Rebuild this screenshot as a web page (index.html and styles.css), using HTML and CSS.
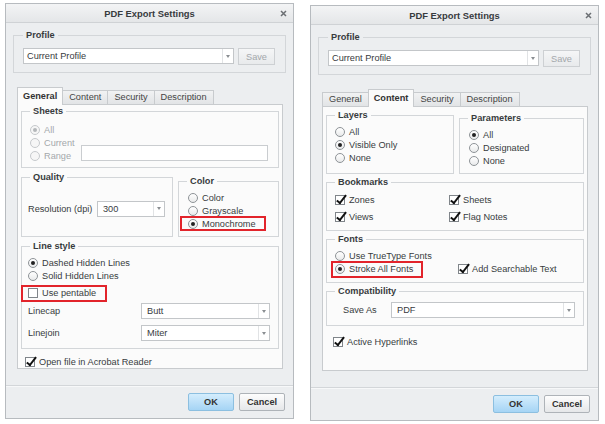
FILE: index.html
```html
<!DOCTYPE html>
<html lang="en">
<head>
  <meta charset="UTF-8" />
  <meta name="viewport" content="width=device-width, initial-scale=1.0"/>
  <title>PDF Export Settings</title>
  <link rel="stylesheet" href="styles.css">
</head>
<body>

<!-- General tab -->
<div class="dialog">
  <div class="titlebar">
    <span class="title">PDF Export Settings</span>
    <svg class="close" width="7" height="7" viewBox="0 0 7 7"><path d="M1 1L6 6M6 1L1 6" stroke="#6b6f73" stroke-width="1.5"/></svg>
  </div>
  <div class="dialog-body">
    <fieldset class="group profile">
      <legend>Profile</legend>
      <div class="combo"><span class="combo-text">Current Profile</span><span class="combo-arrow"></span></div>
      <button class="btn-save" disabled>Save</button>
    </fieldset>

    <div class="tabs">
      <span class="tab active">General</span>
      <span class="tab">Content</span>
      <span class="tab">Security</span>
      <span class="tab">Description</span>
    </div>
    <div class="tab-panel">
      <fieldset class="group sheets">
        <legend>Sheets</legend>
        <div class="opts">
          <div class="opt disabled"><span class="radio on"></span>All</div>
          <div class="opt disabled"><span class="radio"></span>Current</div>
          <div class="opt disabled"><span class="radio"></span>Range</div>
        </div>
        <div class="field"></div>
      </fieldset>

      <div class="pair">
        <fieldset class="group quality">
          <legend>Quality</legend>
          <span>Resolution (dpi)</span>
          <div class="combo res"><span class="combo-text">300</span><span class="combo-arrow"></span></div>
        </fieldset>
        <fieldset class="group color">
          <legend>Color</legend>
          <div class="opt"><span class="radio"></span>Color</div>
          <div class="opt"><span class="radio"></span>Grayscale</div>
          <div class="opt hl hl-mono"><span class="radio on"></span>Monochrome</div>
        </fieldset>
      </div>

      <fieldset class="group linestyle">
        <legend>Line style</legend>
        <div class="opt"><span class="radio on"></span>Dashed Hidden Lines</div>
        <div class="opt"><span class="radio"></span>Solid Hidden Lines</div>
        <div class="opt pentable hl hl-pen"><span class="check"></span>Use pentable</div>
        <div class="select-grid">
          <span>Linecap</span>
          <div class="combo"><span class="combo-text">Butt</span><span class="combo-arrow"></span></div>
          <span>Linejoin</span>
          <div class="combo"><span class="combo-text">Miter</span><span class="combo-arrow"></span></div>
        </div>
      </fieldset>

      <div class="opt open-file"><span class="check on"></span>Open file in Acrobat Reader</div>
    </div>
  </div>
  <div class="footer">
    <button class="btn primary">OK</button>
    <button class="btn">Cancel</button>
  </div>
</div>

<!-- Content tab -->
<div class="dialog">
  <div class="titlebar">
    <span class="title">PDF Export Settings</span>
    <svg class="close" width="7" height="7" viewBox="0 0 7 7"><path d="M1 1L6 6M6 1L1 6" stroke="#6b6f73" stroke-width="1.5"/></svg>
  </div>
  <div class="dialog-body">
    <fieldset class="group profile">
      <legend>Profile</legend>
      <div class="combo"><span class="combo-text">Current Profile</span><span class="combo-arrow"></span></div>
      <button class="btn-save" disabled>Save</button>
    </fieldset>

    <div class="tabs">
      <span class="tab">General</span>
      <span class="tab active">Content</span>
      <span class="tab">Security</span>
      <span class="tab">Description</span>
    </div>
    <div class="tab-panel content-tab">
      <div class="pair">
        <fieldset class="group layers">
          <legend>Layers</legend>
          <div class="opt"><span class="radio"></span>All</div>
          <div class="opt"><span class="radio on"></span>Visible Only</div>
          <div class="opt"><span class="radio"></span>None</div>
        </fieldset>
        <fieldset class="group params">
          <legend>Parameters</legend>
          <div class="opt"><span class="radio on"></span>All</div>
          <div class="opt"><span class="radio"></span>Designated</div>
          <div class="opt"><span class="radio"></span>None</div>
        </fieldset>
      </div>

      <fieldset class="group bookmarks">
        <legend>Bookmarks</legend>
        <div class="opt"><span class="check on"></span>Zones</div>
        <div class="opt"><span class="check on"></span>Sheets</div>
        <div class="opt"><span class="check on"></span>Views</div>
        <div class="opt"><span class="check on"></span>Flag Notes</div>
      </fieldset>

      <fieldset class="group fonts">
        <legend>Fonts</legend>
        <div class="opt"><span class="radio"></span>Use TrueType Fonts</div>
        <div></div>
        <div class="opt hl hl-stroke"><span class="radio on"></span>Stroke All Fonts</div>
        <div class="opt"><span class="check on"></span>Add Searchable Text</div>
      </fieldset>

      <fieldset class="group compat">
        <legend>Compatibility</legend>
        <span class="compat-label">Save As</span>
        <div class="combo"><span class="combo-text">PDF</span><span class="combo-arrow"></span></div>
      </fieldset>

      <div class="opt hyperlinks"><span class="check on"></span>Active Hyperlinks</div>
    </div>
  </div>
  <div class="footer">
    <button class="btn primary">OK</button>
    <button class="btn">Cancel</button>
  </div>
</div>

</body>
</html>
```

FILE: styles.css
```css
body {
  margin: 0;
  padding: 3px 0 0 5px;
  display: flex;
  align-items: flex-start;
  gap: 16px;
  background: #fff;
  font-family: "Liberation Sans", Arial, sans-serif;
  font-size: 9.2px;
  color: #383b3e;
}

.dialog {
  width: 289px;
  height: 416px;
  box-sizing: border-box;
  border: 1px solid #b7bbbf;
  background: #eceef0;
  display: flex;
  flex-direction: column;
}

.dialog + .dialog {
  margin-top: 2px;
}

/* title bar */
.titlebar {
  height: 18px;
  border-bottom: 1px solid #cfd2d5;
  background: linear-gradient(#f3f4f5, #e4e6e8);
  display: flex;
  align-items: center;
  justify-content: center;
  position: relative;
}

.title {
  font-weight: bold;
  font-size: 9.4px;
}

.close {
  position: absolute;
  right: 6px;
  top: 6px;
}

.dialog-body {
  padding: 0 7px;
}

/* group boxes */
.group {
  box-sizing: border-box;
  margin: 0;
  min-width: 0;
  border: 1px solid #d3d6d9;
  padding: 4px 8px 6px;
}

.group legend {
  padding: 0 3px;
  font-weight: bold;
  line-height: 11px;
}

.tab-panel .group + .group,
.tab-panel .pair + .group,
.tab-panel .group + .pair {
  margin-top: 4px;
}

.tab-panel.content-tab .group + .group,
.tab-panel.content-tab .pair + .group {
  margin-top: 3px;
}

.pair {
  display: flex;
  gap: 5px;
}

.pair .group {
  flex: 1;
}

/* options */
.opt {
  display: flex;
  align-items: center;
  height: 13px;
  white-space: nowrap;
}

.opt.disabled {
  color: #a4a8ab;
}

.radio {
  flex: none;
  width: 10px;
  height: 10px;
  box-sizing: border-box;
  margin-right: 4px;
  border: 1px solid #8e9397;
  border-radius: 50%;
  background: linear-gradient(#fff, #e9eaeb);
  display: flex;
  align-items: center;
  justify-content: center;
}

.radio.on::after {
  content: '';
  width: 4px;
  height: 4px;
  border-radius: 50%;
  background: #222;
}

.opt.disabled .radio {
  border-color: #c6c9cc;
  background: #f6f6f6;
}

.opt.disabled .radio.on::after {
  background: #b4b7ba;
}

.check {
  flex: none;
  position: relative;
  width: 10px;
  height: 10px;
  box-sizing: border-box;
  margin-right: 4px;
  border: 1px solid #80858a;
  background: #fff;
}

.check.on::after {
  content: '';
  position: absolute;
  left: 3px;
  top: -3px;
  width: 3px;
  height: 9px;
  border: solid #111;
  border-width: 0 2.4px 2.4px 0;
  transform: rotate(38deg);
}

/* red callouts */
.hl {
  position: relative;
}

.hl::after {
  content: '';
  position: absolute;
  box-sizing: border-box;
  border: 2px solid #e2242b;
}

.hl-mono::after { left: -8px; top: -1px; width: 86px; height: 15px; }
.hl-pen::after { left: -7px; top: -1px; width: 86px; height: 17px; }
.hl-stroke::after { left: -4px; top: -1px; width: 92px; height: 17px; }

/* inputs */
.combo {
  display: flex;
  height: 16px;
  box-sizing: border-box;
  border: 1px solid #c3c6c9;
  background: #fff;
}

.combo-text {
  flex: 1;
  padding-left: 5px;
  line-height: 14px;
}

.combo-arrow {
  width: 10px;
  border-left: 1px solid #e1e3e5;
  display: flex;
  align-items: center;
  justify-content: center;
}

.combo-arrow::after {
  content: '';
  border-left: 2.5px solid transparent;
  border-right: 2.5px solid transparent;
  border-top: 3px solid #8a8e92;
}

.field {
  flex: 1;
  height: 16px;
  box-sizing: border-box;
  align-self: flex-end;
  margin: 0 0 1px 6px;
  border: 1px solid #cacdd0;
  background: #fff;
}

/* profile */
.profile {
  margin-top: 7px;
  padding: 7px 10px 7px 9px;
  display: flex;
  align-items: flex-start;
}

.profile .combo {
  flex: 1;
}

.profile .combo-text {
  padding-left: 3px;
}

.btn-save {
  width: 37px;
  height: 17px;
  margin-left: 4px;
  padding: 0;
  border: 1px solid #cdd0d3;
  background: linear-gradient(#f5f6f7, #e8eaec);
  font: inherit;
  color: #a3a7ab;
}

/* tabs */
.tabs {
  display: flex;
  align-items: flex-end;
  height: 17px;
  margin: 14px 0 0 4px;
}

.tab {
  height: 14px;
  box-sizing: border-box;
  padding: 0 6px;
  margin-right: -1px;
  border: 1px solid #c8cbce;
  border-bottom: none;
  background: linear-gradient(#f1f2f3, #e2e4e6);
  line-height: 13px;
  color: #444;
}

.tab.active {
  position: relative;
  z-index: 1;
  height: 18px;
  margin-bottom: -1px;
  padding: 0 5px;
  background: #fbfbfb;
  font-weight: bold;
  line-height: 16px;
  color: #333;
}

.tab-panel {
  height: 265px;
  box-sizing: border-box;
  margin: 0 3px 0 4px;
  padding: 1px 3px;
  border: 1px solid #c8cbce;
  background: #fbfbfb;
}

.tab-panel.content-tab {
  padding-top: 3px;
}

/* general tab */
.sheets {
  display: flex;
  padding: 6px 10px 5px 8px;
}

.quality {
  flex: none !important;
  width: 152px;
  display: flex;
  align-items: center;
  padding-right: 7px;
}

.quality > span {
  margin-left: -2px;
}

.combo.res {
  width: 68px;
  margin-left: auto;
}

.color .opt {
  margin-left: 1px;
}

.linestyle {
  padding-bottom: 7px;
}

.linestyle > .opt,
.linestyle .select-grid {
  margin-left: -2px;
}

.pentable {
  margin-top: 4px;
}

.select-grid {
  display: grid;
  grid-template-columns: 113px 1fr;
  row-gap: 6px;
  align-items: center;
  margin-top: 4px;
}

.open-file {
  margin: 6px 0 0 4px;
}

/* content tab */
.layers {
  flex: none !important;
  width: 128px;
}

.params .opt {
  margin-left: 1px;
}

.bookmarks {
  display: grid;
  grid-template-columns: 114px 1fr;
  row-gap: 4px;
  padding: 5px 8px 7px;
}

.fonts {
  display: grid;
  grid-template-columns: 123px 1fr;
  padding-bottom: 7px;
}

.compat {
  display: grid;
  grid-template-columns: 56px 1fr;
  align-items: center;
  padding: 5px 8px 7px;
}

.compat-label {
  margin-left: 8px;
}

.hyperlinks {
  margin: 9px 0 0 7px;
}

/* footer */
.footer {
  margin-top: auto;
  display: flex;
  justify-content: flex-end;
  gap: 5px;
  padding: 7px 8px 7px;
  border-top: 1px solid #d3d6d9;
  box-shadow: inset 0 1px #f7f8f9;
}

.btn {
  width: 46px;
  height: 18px;
  padding: 0;
  border: 1px solid #aeb3b8;
  border-radius: 2px;
  background: linear-gradient(#fdfdfd, #e5e7e9);
  font: inherit;
  font-weight: bold;
  color: #333;
}

.btn.primary {
  border-color: #8cbfe0;
  background: linear-gradient(#d4edfd, #a5d4f5);
}
```
